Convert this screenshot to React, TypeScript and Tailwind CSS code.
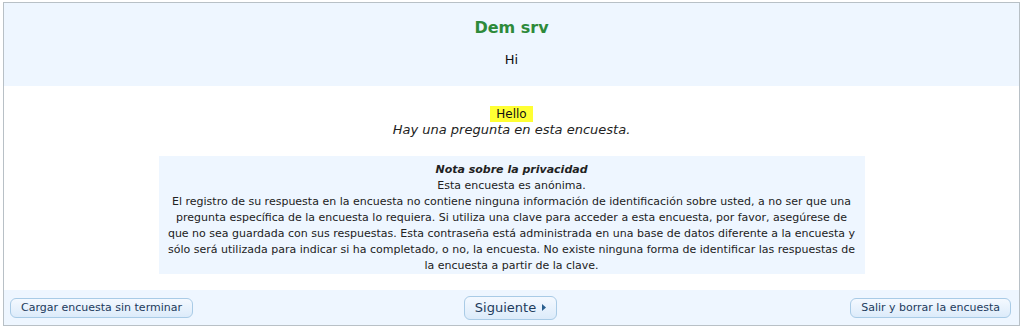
export default function App() {
  const font = { fontFamily: '"DejaVu Sans", Verdana, sans-serif' };
  return (
    <div className="h-[328px] w-[1024px] bg-white pl-[3px] pr-[4px] pt-[2px] pb-[2px]" style={font}>
      <div className="flex h-full flex-col border border-[#b8c0c6]">
        {/* header */}
        <div className="flex h-[83px] flex-col items-center bg-[#eef6ff] pt-[15px]">
          <h1 className="text-[16px] font-bold leading-[20px] text-[#2d8a3a]">Dem srv</h1>
          <p className="mt-[14px] text-[13px] leading-[16px] text-[#111]">Hi</p>
        </div>

        {/* body */}
        <div className="flex flex-1 flex-col items-center bg-white pt-[20px]">
          <span className="bg-[#ffff33] px-[6px] text-[12px] leading-[16px] text-[#111]">Hello</span>
          <p className="text-[13px] italic leading-[16px] text-[#222]">
            Hay una pregunta en esta encuesta.
          </p>
          <div className="mt-[18px] w-[706px] bg-[#eef6ff] px-[8px] pt-[6px] pb-0 text-center text-[11px] leading-[16px] text-[#222]">
            <p className="font-bold italic">Nota sobre la privacidad</p>
            <p>Esta encuesta es anónima.</p>
            <p>
              El registro de su respuesta en la encuesta no contiene ninguna información de identificación sobre
              usted, a no ser que una pregunta específica de la encuesta lo requiera. Si utiliza una clave para
              acceder a esta encuesta, por favor, asegúrese de que no sea guardada con sus respuestas. Esta
              contraseña está administrada en una base de datos diferente a la encuesta y sólo será utilizada para
              indicar si ha completado, o no, la encuesta. No existe ninguna forma de identificar las respuestas de
              la encuesta a partir de la clave.
            </p>
          </div>
        </div>

        {/* footer */}
        <div className="grid h-[35px] grid-cols-3 items-center bg-[#eef6ff] pl-[6px] pr-[8px]">
          <button className="h-[20px] justify-self-start rounded-[6px] border border-[#a9cbe6] bg-gradient-to-b from-[#f4f9ff] to-[#dcebfa] px-[10px] text-[11px] leading-[18px] text-[#1d3b5c]">
            Cargar encuesta sin terminar
          </button>
          <button className="flex h-[24px] items-center gap-[6px] justify-self-center rounded-[6px] border border-[#a9cbe6] bg-gradient-to-b from-[#f4f9ff] to-[#dcebfa] px-[10px] text-[13px] leading-[20px] text-[#1d3b5c]">
            Siguiente
            <svg width="4" height="7" viewBox="0 0 4 7">
              <path d="M0 0 L4 3.5 L0 7 Z" fill="#2a5f8f" />
            </svg>
          </button>
          <button className="h-[20px] justify-self-end rounded-[6px] border border-[#a9cbe6] bg-gradient-to-b from-[#f4f9ff] to-[#dcebfa] px-[10px] text-[11px] leading-[18px] text-[#1d3b5c]">
            Salir y borrar la encuesta
          </button>
        </div>
      </div>
    </div>
  );
}
